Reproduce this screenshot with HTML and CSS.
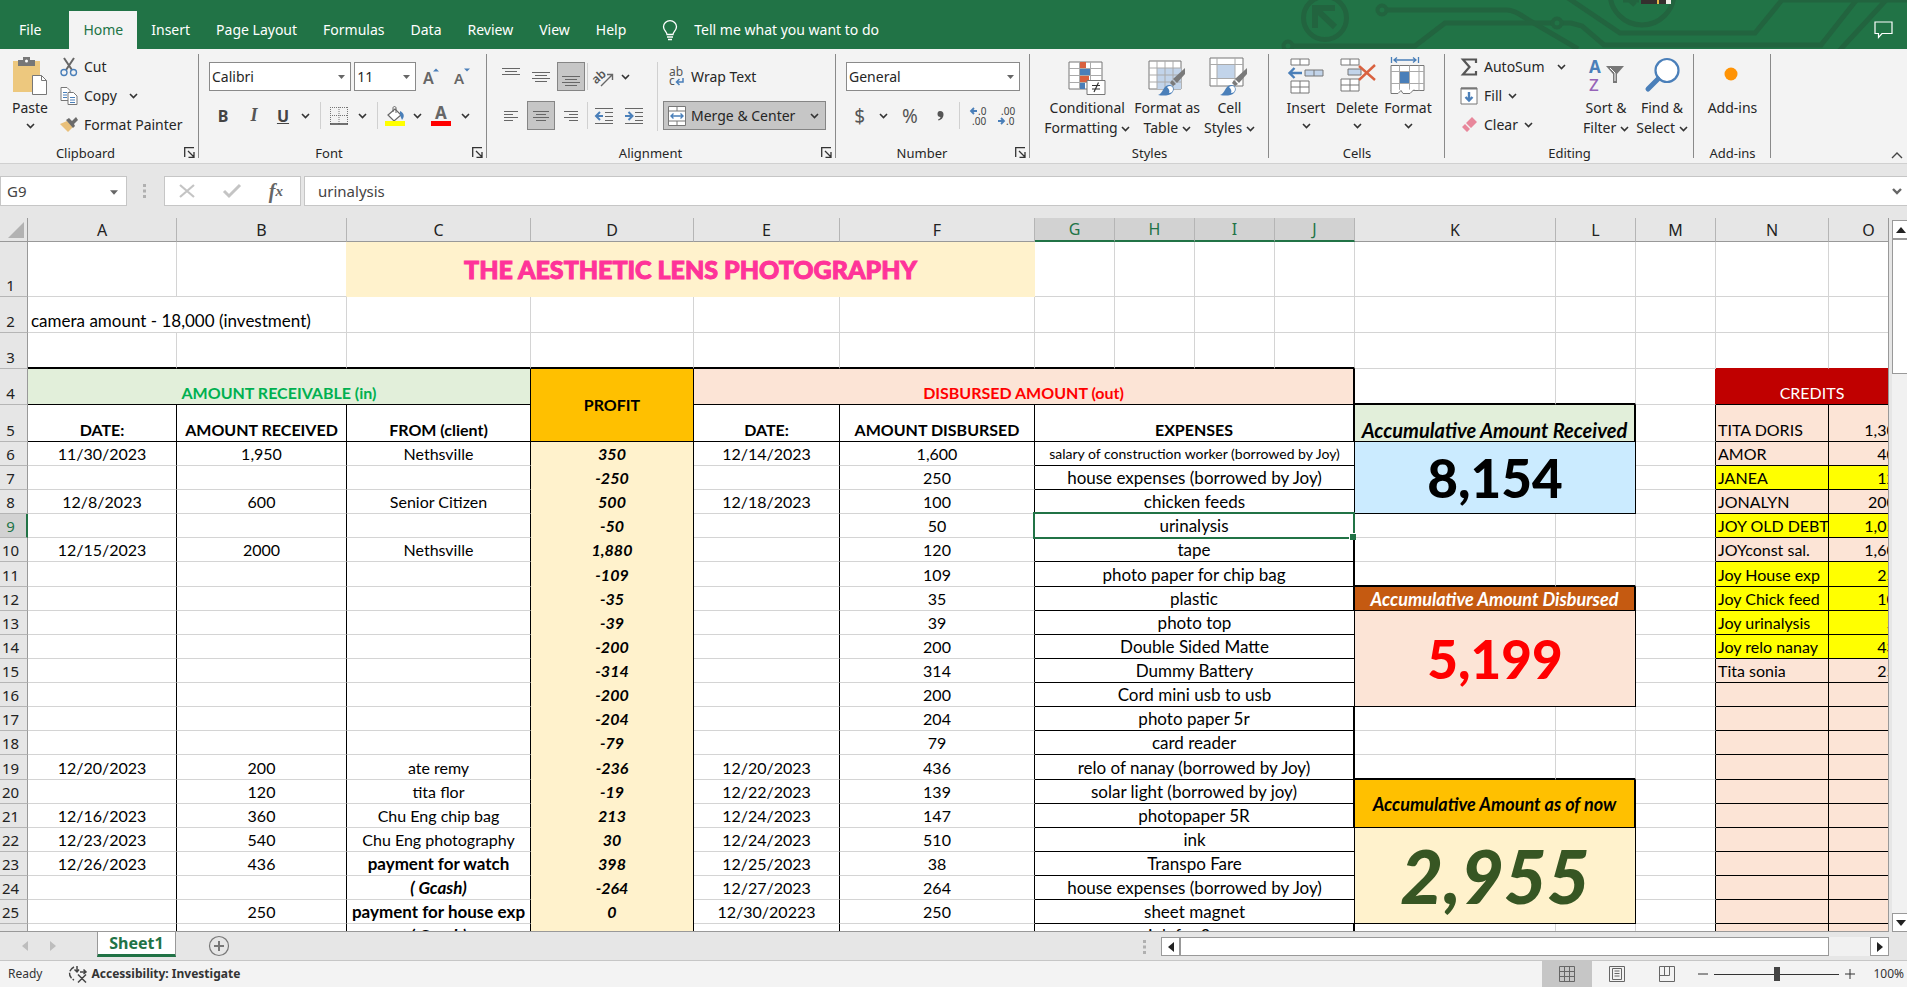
FILE: index.html
```
<!DOCTYPE html>
<html lang="en">
<head>
<meta charset="utf-8">
<title>The Aesthetic Lens Photography</title>
<link rel="stylesheet" href="styles.css">
</head>
<body>
<svg class="defs" aria-hidden="true">
  <symbol id="chev" viewBox="0 0 9 6"><path d="M1 1l3.5 3.5L8 1" fill="none" stroke="#333" stroke-width="1.6"/></symbol>
  <symbol id="launch" viewBox="0 0 11 11"><path d="M.7 10V.7H10M4 4l5.500 5.500M10 5v5.300H4.500" fill="none" stroke="#333" stroke-width="1.300"/></symbol>
  <symbol id="tri" viewBox="0 0 7 4"><path d="M0 0h7L3.500 4z" fill="#666"/></symbol>
  <symbol id="brush" viewBox="0 0 28 28"><path d="M27 0v6l-8 9-4-4z" fill="#7a7a7a"/><path d="M14 12l4 4-3 2-3-3z" fill="#7a7a7a"/><path d="M0 27c5-1 5-10 11-10 5 0 6 5 3 8-3 3-9 3-14 2z" fill="#4a7fb9"/><path d="M9 19c3-2 6-1 6 2s-2 4-4 4c1-2 0-4-2-6z" fill="#fff"/></symbol>
</svg>

<header class="tabs">
  <svg class="circuit" viewBox="0 0 627 49" width="627" height="49" aria-hidden="true">
    <g fill="none" stroke="#22643f" stroke-width="5">
      <circle cx="45" cy="18" r="21.500"/>
      <path d="M35 28V8h20M36 9l19 18" stroke-width="6"/>
      <circle cx="102" cy="10" r="4.500" stroke-width="4"/>
      <path d="M107 10h120c10 0 17 8 25 12l46 27"/>
      <circle cx="8" cy="46" r="4.500" stroke-width="4"/>
      <path d="M13 46h122l30-23h107M282 23h9l11 3 22 19h217l37-47"/>
      <circle cx="277" cy="23" r="4.500" stroke-width="4"/>
      <path d="M288-2l52 35h135l27-33h125M559 51l48-52"/>
      <circle cx="362" cy="-7" r="32"/>
      <path d="M345-4l10 9M343 0h16"/>
    </g>
    <path d="M361 0h29v4h-29z" fill="#352f2e"/><path d="M377 0h2v4h-2z" fill="#e8b84a"/><path d="M386 0h5v4h-5z" fill="#f1eee9"/>
  </svg>
  <nav class="tablist">
    <button class="tab file">File</button><button class="tab on">Home</button><button class="tab">Insert</button><button class="tab">Page Layout</button><button class="tab">Formulas</button><button class="tab">Data</button><button class="tab">Review</button><button class="tab">View</button><button class="tab">Help</button>
    <button class="tab tell"><svg width="16" height="21" viewBox="0 0 16 21"><path d="M5 14.500C5 12 1.500 10.500 1.500 6.700a6.500 6 0 0 1 13 0C14.500 10.500 11 12 11 14.500zM5 17h6M6 19.500h4" fill="none" stroke="#fff" stroke-width="1.300"/></svg>Tell me what you want to do</button>
  </nav>
  <button class="comment" aria-label="Comments"><svg width="20" height="18" viewBox="0 0 20 18"><path d="M1 1h17v11.500H8l-3.500 4v-4H1z" fill="none" stroke="#fff" stroke-width="1.200"/></svg></button>
</header>

<section class="ribbon" aria-label="Home">
  <div class="group g-clip">
    <div class="body top">
      <button class="big paste"><svg width="36" height="40" viewBox="0 0 36 40"><path d="M1 4h27v31H1z" fill="#edc87e"/><path d="M6 3h5V0h7v3h5v6H6z" fill="#777"/><circle cx="14.500" cy="4" r="1.500" fill="#fff"/><path d="M20.500 18.500h9l5 5v14h-14z" fill="#fff" stroke="#777"/><path d="M29.500 18.500v5h5" fill="none" stroke="#777"/></svg><span>Paste</span><svg class="chev"><use href="#chev"/></svg></button>
      <div class="list">
        <button class="small"><svg width="18" height="20" viewBox="0 0 18 20"><path d="M4 1l8 12M14 1L6 13" stroke="#666" stroke-width="2"/><circle cx="4" cy="15.500" r="3" fill="none" stroke="#4a7fb9" stroke-width="1.400"/><circle cx="13.500" cy="15.500" r="3" fill="none" stroke="#4a7fb9" stroke-width="1.400"/></svg>Cut</button>
        <button class="small"><svg width="18" height="20" viewBox="0 0 18 20"><g fill="#fff" stroke="#777"><path d="M1 1.500h6l3 3v10H1z"/><path d="M8 6.500h5.500l3.500 3.500v8.500H8z"/></g><path d="M3 6.500h4M3 9h4M3 11.500h4M10 11.500h5M10 14h5M10 16.500h5" stroke="#4a7fb9"/></svg>Copy<svg class="chev far"><use href="#chev"/></svg></button>
        <button class="small"><svg width="18" height="18" viewBox="0 0 18 18"><path d="M0 8l7-3 6 6-5 5z" fill="#e9c07a"/><path d="M6 4l3-2 3 3 4-4 2 3-4 4 1 2-2 2z" fill="#6b6b6b"/></svg>Format Painter</button>
      </div>
    </div>
    <div class="foot">Clipboard<button class="launch" aria-label="Clipboard options"><svg><use href="#launch"/></svg></button></div>
  </div>

  <div class="group g-font">
    <div class="body rows">
      <div class="row">
        <label class="combo fname"><select aria-label="Font"><option>Calibri</option></select><svg><use href="#tri"/></svg></label>
        <label class="combo fsize"><select aria-label="Font size"><option>11</option></select><svg><use href="#tri"/></svg></label>
        <button class="ic w28" aria-label="Increase font size"><svg width="18" height="18" viewBox="0 0 18 18"><text x="0" y="16" class="t15">A</text><path d="M10 3.500l3-3 3 3z" fill="#4a7fb9"/></svg></button>
        <button class="ic w28" aria-label="Decrease font size"><svg width="18" height="18" viewBox="0 0 18 18"><text x="0" y="16" class="t14">A</text><path d="M10 .5l3 3 3-3z" fill="#4a7fb9"/></svg></button>
      </div>
      <div class="row tight">
        <button class="ic w28 fb">B</button><button class="ic w34 fi">I</button><button class="ic w24 fu">U</button><button class="ic w20" aria-label="Underline styles"><svg class="chev"><use href="#chev"/></svg></button><i class="vs"></i>
        <button class="ic w26" aria-label="Borders"><svg width="18" height="18" viewBox="0 0 18 18"><path d="M.5 0v17M17.500 0v17M9 0v17M0 .5h18M0 8.500h18" stroke="#777" stroke-dasharray="1 1" fill="none"/><path d="M0 17h18" stroke="#444" stroke-width="1.500"/></svg></button><button class="ic w20" aria-label="Border styles"><svg class="chev"><use href="#chev"/></svg></button><i class="vs"></i>
        <button class="ic w24" aria-label="Fill colour"><svg width="20" height="20" viewBox="0 0 20 20"><path d="M3 9l7-6 6 6-7 6z" fill="#fff" stroke="#666" stroke-width="1.200"/><path d="M8 6V2c0-2 3-2 3 0v5" fill="none" stroke="#666"/><path d="M15 5c4 2 5 5 2 9l-2-5z" fill="#4a7fb9"/><path d="M0 15h20v5H0z" fill="#ff0"/></svg></button><button class="ic w20" aria-label="Fill colours"><svg class="chev"><use href="#chev"/></svg></button>
        <button class="ic w28" aria-label="Font colour"><svg width="20" height="20" viewBox="0 0 20 20"><text x="4" y="13" class="fa">A</text><path d="M0 15h20v5H0z" fill="#f00"/></svg></button><button class="ic w20" aria-label="Font colours"><svg class="chev"><use href="#chev"/></svg></button>
      </div>
    </div>
    <div class="foot">Font<button class="launch" aria-label="Font options"><svg><use href="#launch"/></svg></button></div>
  </div>

  <div class="group g-align">
    <div class="body cols">
      <div class="aligns">
        <button class="ic" aria-label="Top align"><svg width="18" height="18" viewBox="0 0 18 18"><path d="M0 .5h18M3 3.500h12M0 6.500h18" stroke="#666"/></svg></button>
        <button class="ic" aria-label="Middle align"><svg width="18" height="18" viewBox="0 0 18 18"><path d="M0 4.500h18M3 7.500h12M0 10.500h18M3 13.500h12" stroke="#666"/></svg></button>
        <button class="ic act" aria-label="Bottom align"><svg width="18" height="18" viewBox="0 0 18 18"><path d="M0 8.500h18M3 11.500h12M0 14.500h18M3 17.500h12" stroke="#666"/></svg></button>
        <i class="vs"></i>
        <button class="ic" aria-label="Orientation"><svg width="20" height="20" viewBox="0 0 20 20"><text x="-2" y="13" class="t12 m" transform="rotate(-42 6 10)">ab</text><path d="M7 19L18 8M13 7.500h5.500V13" fill="none" stroke="#666" stroke-width="1.400"/></svg></button>
        <button class="ic start" aria-label="Orientation choices"><svg class="chev"><use href="#chev"/></svg></button>
        <button class="ic" aria-label="Align left"><svg width="18" height="18" viewBox="0 0 18 18"><path d="M2 4.500h14M2 7.500h9M2 10.500h14M2 13.500h9" stroke="#666"/></svg></button>
        <button class="ic act" aria-label="Centre"><svg width="18" height="18" viewBox="0 0 18 18"><path d="M1 4.500h16M4 7.500h10M1 10.500h16M4 13.500h10" stroke="#666"/></svg></button>
        <button class="ic" aria-label="Align right"><svg width="18" height="18" viewBox="0 0 18 18"><path d="M2 4.500h14M7 7.500h9M2 10.500h14M7 13.500h9" stroke="#666"/></svg></button>
        <i class="vs"></i>
        <button class="ic" aria-label="Decrease indent"><svg width="18" height="18" viewBox="0 0 18 18"><path d="M0 1.500h18M10 5.500h8M10 9.500h8M10 13.500h8M0 16.500h18" stroke="#666"/><path d="M8 9H2M5 5L1 9l4 4" stroke="#4a7fb9" stroke-width="2" fill="none"/></svg></button>
        <button class="ic" aria-label="Increase indent"><svg width="18" height="18" viewBox="0 0 18 18"><path d="M0 1.500h18M10 5.500h8M10 9.500h8M10 13.500h8M0 16.500h18" stroke="#666"/><path d="M0 9h6M3.500 5l4 4-4 4" stroke="#4a7fb9" stroke-width="2" fill="none"/></svg></button>
      </div>
      <i class="vs tall"></i>
      <div class="wraps">
        <button class="wide"><svg width="18" height="20" viewBox="0 0 18 20"><text x="1" y="9" class="t12">ab</text><text x="1" y="18" class="t12">c</text><path d="M15 11v4H9M11.500 12l-3 3 3 3" stroke="#4a7fb9" stroke-width="1.500" fill="none"/></svg>Wrap Text</button>
        <button class="wide act"><svg width="18" height="20" viewBox="0 0 18 20"><path d="M.5.500h17v19H.5zM.5 5h17M.5 15h17M9 .5V5M9 15v4.500" fill="#fff" stroke="#777"/><path d="M3 10h12M5.500 7.500L3 10l2.500 2.500M12.500 7.500L15 10l-2.500 2.500" fill="none" stroke="#4a7fb9" stroke-width="1.400"/></svg>Merge &amp; Center<svg class="chev"><use href="#chev"/></svg></button>
      </div>
    </div>
    <div class="foot">Alignment<button class="launch" aria-label="Alignment options"><svg><use href="#launch"/></svg></button></div>
  </div>

  <div class="group g-num">
    <div class="body rows">
      <div class="row"><label class="combo fnum"><select aria-label="Number format"><option>General</option></select><svg><use href="#tri"/></svg></label></div>
      <div class="row tight">
        <button class="ic w28 sym">$</button><button class="ic w20" aria-label="Currency choices"><svg class="chev"><use href="#chev"/></svg></button><button class="ic w34 sym">%</button><button class="ic w28" aria-label="Comma style"><svg width="7" height="10" viewBox="0 0 7 10"><path d="M3 0c2.500 0 3.500 1.500 3.500 3.500C6.500 7 4 9 1.500 9.500L1 8.500C2.500 8 3.500 7 3.500 6 1.500 6 .5 5 .5 3S1.500 0 3 0z" fill="#555"/></svg></button><i class="vs"></i>
        <button class="ic w28" aria-label="Increase decimal"><svg width="17" height="20" viewBox="0 0 17 20"><text x="8" y="9" class="t10">.0</text><text x="2" y="19" class="t10">.00</text><path d="M7 5H1.500M4 2L1 5l3 3" stroke="#4a7fb9" stroke-width="1.800" fill="none"/></svg></button>
        <button class="ic w28" aria-label="Decrease decimal"><svg width="17" height="20" viewBox="0 0 17 20"><text x="3" y="9" class="t10">.00</text><text x="8" y="19" class="t10">.0</text><path d="M0 15h5.500M3 12l3 3-3 3" stroke="#4a7fb9" stroke-width="1.800" fill="none"/></svg></button>
      </div>
    </div>
    <div class="foot">Number<button class="launch" aria-label="Number options"><svg><use href="#launch"/></svg></button></div>
  </div>

  <div class="group g-styles">
    <div class="body top">
      <button class="big"><svg width="38" height="40" viewBox="0 0 38 40"><path d="M1 5h33v27H1z" fill="#fff" stroke="#777"/><path d="M1 11.500h33M1 18.500h33M1 25.500h33M11.500 5v27M22.500 5v27" stroke="#aaa"/><path d="M12 5h6v6h-6zM12 19h9v6h-9z" fill="#d9613f"/><path d="M12 12h10v6H12zM12 26h5v6h-5z" fill="#4a7fb9"/><path d="M19 23.500h18v14H19z" fill="#fff" stroke="#777"/><path d="M24 28.500h8M24 32h8M30.500 25.500L26 35" stroke="#333" stroke-width="1.200"/></svg><span>Conditional<br>Formatting <svg class="chev"><use href="#chev"/></svg></span></button>
      <button class="big"><svg width="38" height="40" viewBox="0 0 38 40"><path d="M1 4h32v28H1z" fill="#fff" stroke="#777"/><path d="M9 11h24v21H9z" fill="#c2d4ea"/><path d="M1 11h32M1 18h32M1 25h32M9 4v28M17 4v28M25 4v28" stroke="#aaa" fill="none"/><use href="#brush" x="10" y="11" width="28" height="28"/></svg><span>Format as<br>Table <svg class="chev"><use href="#chev"/></svg></span></button>
      <button class="big"><svg width="40" height="40" viewBox="0 0 40 40"><path d="M1 1h33v28H1z" fill="#fff" stroke="#777"/><path d="M8 8h18v13H8z" fill="#c2d4ea"/><path d="M1 7.500h33M1 21.500h33M8 1v28M26 1v28" stroke="#aaa"/><use href="#brush" x="11" y="11" width="28" height="28"/></svg><span>Cell<br>Styles <svg class="chev"><use href="#chev"/></svg></span></button>
    </div>
    <div class="foot">Styles</div>
  </div>

  <div class="group g-cells">
    <div class="body top">
      <button class="big"><svg width="38" height="40" viewBox="0 0 38 40"><g fill="#fff" stroke="#777"><path d="M4 2h18v6H4zM13 2v6M4 24h18v12H4zM4 30h18M13 24v12"/><path d="M18 13h18v6H18zM27 13v6" fill="#c2d4ea"/></g><path d="M15 16H3M7.500 11l-5 5 5 5" fill="none" stroke="#4a7fb9" stroke-width="2.400"/></svg><span>Insert</span><svg class="chev"><use href="#chev"/></svg></button>
      <button class="big"><svg width="38" height="40" viewBox="0 0 38 40"><g fill="#fff" stroke="#777"><path d="M3 2h18v6H3zM12 2v6M3 22h18v12H3zM3 28h18M12 22v12"/><path d="M10 12h13v6H10z" fill="#c2d4ea"/></g><path d="M21 9l16 14M37 8L21 23" fill="none" stroke="#d9613f" stroke-width="2.400"/></svg><span>Delete</span><svg class="chev"><use href="#chev"/></svg></button>
      <button class="big"><svg width="38" height="40" viewBox="0 0 38 40"><path d="M2.500 0v6M29.500 0v6M5 3h22M8 .5L5 3l3 2.500M24 .5L27 3l-3 2.500" fill="none" stroke="#4a7fb9" stroke-width="1.300"/><path d="M2 8.500h33v25H2z" fill="#fff" stroke="#777"/><path d="M2 14.500h33M2 26.500h33M10.500 8.500v25M20.500 8.500v25M30 8.500v25" stroke="#aaa"/><path d="M11 15h9v11h-9z" fill="#4a7fb9"/><path d="M2 33v3.500h7l3-3 2 3h7l4-4" fill="#fff" stroke="#777"/></svg><span>Format</span><svg class="chev"><use href="#chev"/></svg></button>
    </div>
    <div class="foot">Cells</div>
  </div>

  <div class="group g-edit">
    <div class="body top">
      <div class="list">
        <button class="small"><svg width="18" height="18" viewBox="0 0 18 18"><path d="M16 5V1.500H3L9.500 9 3 16.500h13V13" fill="none" stroke="#555" stroke-width="2.200"/></svg>AutoSum<svg class="chev far"><use href="#chev"/></svg></button>
        <button class="small"><svg width="18" height="18" viewBox="0 0 18 18"><path d="M1 1h16v16H1z" fill="#fff" stroke="#777"/><path d="M1 1.500h16" stroke="#777" stroke-width="2"/><path d="M9 5v8M5.500 10L9 13.500l3.500-3.500" stroke="#4a7fb9" stroke-width="2.400" fill="none"/></svg>Fill<svg class="chev"><use href="#chev"/></svg></button>
        <button class="small"><svg width="18" height="18" viewBox="0 0 18 18"><path d="M6 7l6-6 5 5-6 6zM5 8l5 5-3 3-5-5z" fill="#e8879b"/></svg>Clear<svg class="chev"><use href="#chev"/></svg></button>
      </div>
      <button class="big"><svg width="38" height="40" viewBox="0 0 38 40"><text x="2" y="16" class="az b">A</text><text x="2" y="34" class="az p">Z</text><path d="M19 9h18l-7 8v9h-4v-9z" fill="#777"/><path d="M23 11l5 5v8" fill="none" stroke="#fff"/></svg><span>Sort &amp;<br>Filter <svg class="chev"><use href="#chev"/></svg></span></button>
      <button class="big"><svg width="38" height="40" viewBox="0 0 38 40"><circle cx="24" cy="13.500" r="11.500" fill="#fff" stroke="#4a7fb9" stroke-width="2.200"/><path d="M15 22L5 32" stroke="#4a7fb9" stroke-width="5" stroke-linecap="round"/></svg><span>Find &amp;<br>Select <svg class="chev"><use href="#chev"/></svg></span></button>
    </div>
    <div class="foot">Editing</div>
  </div>

  <div class="group g-add">
    <div class="body top">
      <button class="big"><svg width="38" height="40" viewBox="0 0 38 40"><circle cx="17" cy="17" r="6.500" fill="#ff9305"/></svg><span>Add-ins</span></button>
    </div>
    <div class="foot">Add-ins</div>
  </div>
  <button class="collapse" aria-label="Collapse the ribbon"><svg width="12" height="7" viewBox="0 0 12 7"><path d="M1 6l5-5 5 5" fill="none" stroke="#444" stroke-width="1.400"/></svg></button>
</section>

<section class="fbar">
  <label class="namebox"><input aria-label="Name box" value="G9"><svg><use href="#tri"/></svg></label>
  <svg class="dots" width="3" height="14" viewBox="0 0 3 14"><path d="M0 0h3v3H0zM0 5.500h3v3H0zM0 11h3v3H0z" fill="#b0b0b0"/></svg>
  <div class="fbtns">
    <button aria-label="Cancel"><svg width="16" height="14" viewBox="0 0 16 14"><path d="M1 1l14 12M15 1L1 13" stroke="#c4c4c4" stroke-width="2.200"/></svg></button>
    <button aria-label="Enter"><svg width="18" height="14" viewBox="0 0 18 14"><path d="M1 7l5 5L17 1" fill="none" stroke="#c4c4c4" stroke-width="3"/></svg></button>
    <button class="fx" aria-label="Insert function">f<sub>x</sub></button>
  </div>
  <div class="finput"><input aria-label="Formula" value="urinalysis"><svg width="10" height="7" viewBox="0 0 10 7"><path d="M1 1l4 4 4-4" fill="none" stroke="#666" stroke-width="2.400"/></svg></div>
</section>

<main class="work">
<div class="sheet">
<table>
<colgroup><col class="c0"><col class="cA"><col class="cB"><col class="cC"><col class="cD"><col class="cE"><col class="cF"><col class="c80"><col class="c80"><col class="c80"><col class="c80"><col class="cK"><col class="c80"><col class="c80"><col class="cN"><col class="c80"></colgroup>
<thead><tr><th class="corner"><svg width="16" height="16" viewBox="0 0 16 16"><path d="M16 0v16H0z" fill="#b2b2b2"/></svg></th><th>A</th><th>B</th><th>C</th><th>D</th><th>E</th><th>F</th><th class="sel">G</th><th class="sel">H</th><th class="sel">I</th><th class="sel">J</th><th>K</th><th>L</th><th>M</th><th>N</th><th>O</th></tr></thead>
<tbody>
<tr class="r1"><th>1</th><td></td><td class="rc"></td><td colspan="4" class="title">THE AESTHETIC LENS PHOTOGRAPHY</td><td></td><td></td><td></td><td></td><td></td><td></td><td></td><td></td><td></td></tr>
<tr class="r36"><th>2</th><td colspan="2" class="l">camera amount - 18,000 (investment)</td><td></td><td></td><td></td><td></td><td></td><td></td><td></td><td></td><td></td><td></td><td></td><td></td><td></td></tr>
<tr class="r36 r3"><th>3</th><td class="bb"></td><td class="bb"></td><td class="bb"></td><td class="bb"></td><td class="bb"></td><td class="bb"></td><td class="bb"></td><td class="bb"></td><td class="bb"></td><td class="bb"></td><td></td><td></td><td></td><td class="red-b"></td><td class="red-b"></td></tr>
<tr class="r36"><th>4</th><td colspan="3" class="k b recv">AMOUNT RECEIVABLE (in)</td><td rowspan="2" class="k b profit">PROFIT</td><td colspan="6" class="kk b disb">DISBURSED AMOUNT (out)</td><td class="bb"></td><td class="bb"></td><td class="red-r"></td><td colspan="2" class="credits">CREDITS</td></tr>
<tr class="r37"><th>5</th><td class="k b h">DATE:</td><td class="k b h">AMOUNT RECEIVED</td><td class="k b h">FROM (client)</td><td class="k b h">DATE:</td><td class="k b h">AMOUNT DISBURSED</td><td colspan="4" class="kk b h">EXPENSES</td><td colspan="2" class="kk acc green">Accumulative Amount Received</td><td class="kr"></td><td class="n">TITA DORIS</td><td class="o">1,300</td></tr>
<tr><th>6</th><td class="k">11/30/2023</td><td class="k">1,950</td><td class="k">Nethsville</td><td class="d">350</td><td class="k">12/14/2023</td><td class="k">1,600</td><td colspan="4" class="x tiny">salary of construction worker (borrowed by Joy)</td><td colspan="2" rowspan="3" class="sum blue">8,154</td><td class="kr"></td><td class="n">AMOR</td><td class="o">400</td></tr>
<tr><th>7</th><td class="k"></td><td class="k"></td><td class="k"></td><td class="d">-250</td><td class="k"></td><td class="k">250</td><td colspan="4" class="x">house expenses (borrowed by Joy)</td><td class="kr"></td><td class="n y">JANEA</td><td class="o y">120</td></tr>
<tr><th>8</th><td class="k">12/8/2023</td><td class="k">600</td><td class="k">Senior Citizen</td><td class="d">500</td><td class="k">12/18/2023</td><td class="k">100</td><td colspan="4" class="x">chicken feeds</td><td class="kr"></td><td class="n">JONALYN</td><td class="o">2000</td></tr>
<tr><th class="sel">9</th><td class="k"></td><td class="k"></td><td class="k"></td><td class="d">-50</td><td class="k"></td><td class="k">50</td><td colspan="4" class="x t cursor">urinalysis</td><td></td><td></td><td class="kr"></td><td class="n y">JOY OLD DEBT</td><td class="o y">1,050</td></tr>
<tr><th>10</th><td class="k">12/15/2023</td><td class="k">2000</td><td class="k">Nethsville</td><td class="d">1,880</td><td class="k"></td><td class="k">120</td><td colspan="4" class="x t">tape</td><td></td><td></td><td class="kr"></td><td class="n">JOYconst sal.</td><td class="o">1,600</td></tr>
<tr class="r25"><th>11</th><td class="k"></td><td class="k"></td><td class="k"></td><td class="d">-109</td><td class="k"></td><td class="k">109</td><td colspan="4" class="x t">photo paper for chip bag</td><td class="bb"></td><td class="bb"></td><td class="kr"></td><td class="n y">Joy House exp</td><td class="o y">250</td></tr>
<tr><th>12</th><td class="k"></td><td class="k"></td><td class="k"></td><td class="d">-35</td><td class="k"></td><td class="k">35</td><td colspan="4" class="x t">plastic</td><td colspan="2" class="kk acc rust">Accumulative Amount Disbursed</td><td class="kr"></td><td class="n y">Joy Chick feed</td><td class="o y">100</td></tr>
<tr><th>13</th><td class="k"></td><td class="k"></td><td class="k"></td><td class="d">-39</td><td class="k"></td><td class="k">39</td><td colspan="4" class="x">photo top</td><td colspan="2" rowspan="4" class="sum pink">5,199</td><td class="kr"></td><td class="n y">Joy urinalysis</td><td class="o y">50</td></tr>
<tr><th>14</th><td class="k"></td><td class="k"></td><td class="k"></td><td class="d">-200</td><td class="k"></td><td class="k">200</td><td colspan="4" class="x">Double Sided Matte</td><td class="kr"></td><td class="n y">Joy relo nanay</td><td class="o y">436</td></tr>
<tr><th>15</th><td class="k"></td><td class="k"></td><td class="k"></td><td class="d">-314</td><td class="k"></td><td class="k">314</td><td colspan="4" class="x">Dummy Battery</td><td class="kr"></td><td class="n">Tita sonia</td><td class="o">250</td></tr>
<tr><th>16</th><td class="k"></td><td class="k"></td><td class="k"></td><td class="d">-200</td><td class="k"></td><td class="k">200</td><td colspan="4" class="x">Cord mini usb to usb</td><td class="kr"></td><td class="n"></td><td class="o"></td></tr>
<tr><th>17</th><td class="k"></td><td class="k"></td><td class="k"></td><td class="d">-204</td><td class="k"></td><td class="k">204</td><td colspan="4" class="x t">photo paper 5r</td><td></td><td></td><td class="kr"></td><td class="n"></td><td class="o"></td></tr>
<tr><th>18</th><td class="k"></td><td class="k"></td><td class="k"></td><td class="d">-79</td><td class="k"></td><td class="k">79</td><td colspan="4" class="x t">card reader</td><td></td><td></td><td class="kr"></td><td class="n"></td><td class="o"></td></tr>
<tr class="r25"><th>19</th><td class="k">12/20/2023</td><td class="k">200</td><td class="k">ate remy</td><td class="d">-236</td><td class="k">12/20/2023</td><td class="k">436</td><td colspan="4" class="x t">relo of nanay (borrowed by Joy)</td><td class="bb"></td><td class="bb"></td><td class="kr"></td><td class="n"></td><td class="o"></td></tr>
<tr><th>20</th><td class="k"></td><td class="k">120</td><td class="k">tita flor</td><td class="d">-19</td><td class="k">12/22/2023</td><td class="k">139</td><td colspan="4" class="x t">solar light (borrowed by joy)</td><td colspan="2" rowspan="2" class="kk acc gold">Accumulative Amount as of now</td><td class="kr"></td><td class="n"></td><td class="o"></td></tr>
<tr><th>21</th><td class="k">12/16/2023</td><td class="k">360</td><td class="k">Chu Eng chip bag</td><td class="d">213</td><td class="k">12/24/2023</td><td class="k">147</td><td colspan="4" class="x t">photopaper 5R</td><td class="kr"></td><td class="n"></td><td class="o"></td></tr>
<tr><th>22</th><td class="k">12/23/2023</td><td class="k">540</td><td class="k">Chu Eng photography</td><td class="d">30</td><td class="k">12/24/2023</td><td class="k">510</td><td colspan="4" class="x">ink</td><td colspan="2" rowspan="4" class="sum cream">2,955</td><td class="kr"></td><td class="n"></td><td class="o"></td></tr>
<tr><th>23</th><td class="k">12/26/2023</td><td class="k">436</td><td class="k b pay">payment for watch</td><td class="d">398</td><td class="k">12/25/2023</td><td class="k">38</td><td colspan="4" class="x">Transpo Fare</td><td class="kr"></td><td class="n"></td><td class="o"></td></tr>
<tr><th>24</th><td class="k"></td><td class="k"></td><td class="k b pay it">( Gcash)</td><td class="d">-264</td><td class="k">12/27/2023</td><td class="k">264</td><td colspan="4" class="x">house expenses (borrowed by Joy)</td><td class="kr"></td><td class="n"></td><td class="o"></td></tr>
<tr><th>25</th><td class="k"></td><td class="k">250</td><td class="k b pay">payment for house exp</td><td class="d">0</td><td class="k">12/30/20223</td><td class="k">250</td><td colspan="4" class="x">sheet magnet</td><td class="kr"></td><td class="n"></td><td class="o"></td></tr>
<tr><th>26</th><td class="k"></td><td class="k"></td><td class="k b pay it">( Gcash)</td><td class="d">-90</td><td class="k">12/30/2023</td><td class="k">90</td><td colspan="4" class="x t">ink for 3 pcs</td><td></td><td></td><td class="kr"></td><td class="n"></td><td class="o"></td></tr>
</tbody>
</table>
</div>
<div class="vscroll">
  <button aria-label="Scroll up"><svg width="10" height="6" viewBox="0 0 10 6"><path d="M0 6l5-6 5 6z" fill="#222"/></svg></button>
  <div class="track"><div class="thumb"></div></div>
  <button aria-label="Scroll down"><svg width="10" height="6" viewBox="0 0 10 6"><path d="M0 0l5 6 5-6z" fill="#222"/></svg></button>
</div>
</main>

<div class="sheets">
  <button class="nav" aria-label="Previous sheet"><svg width="6" height="10" viewBox="0 0 6 10"><path d="M6 0v10L0 5z" fill="#bdbdbd"/></svg></button>
  <button class="nav" aria-label="Next sheet"><svg width="6" height="10" viewBox="0 0 6 10"><path d="M0 0v10l6-5z" fill="#bdbdbd"/></svg></button>
  <button class="stab">Sheet1</button>
  <button class="add" aria-label="New sheet"><svg width="22" height="22" viewBox="0 0 22 22"><circle cx="11" cy="11" r="9.500" fill="none" stroke="#777" stroke-width="1.200"/><path d="M6 11h10M11 6v10" stroke="#777" stroke-width="2"/></svg></button>
  <div class="hs">
    <svg class="dots" width="3" height="14" viewBox="0 0 3 14"><path d="M0 0h3v3H0zM0 5.500h3v3H0zM0 11h3v3H0z" fill="#b0b0b0"/></svg>
    <button aria-label="Scroll left"><svg width="6" height="10" viewBox="0 0 6 10"><path d="M6 0v10L0 5z" fill="#222"/></svg></button>
    <div class="htrack"><div class="hthumb"></div></div>
    <button aria-label="Scroll right"><svg width="6" height="10" viewBox="0 0 6 10"><path d="M0 0v10l6-5z" fill="#222"/></svg></button>
  </div>
</div>

<footer class="status">
  <span>Ready</span>
  <button class="access"><svg width="20" height="18" viewBox="0 0 20 18"><path d="M6 2C0 5 0 12 6 15" fill="none" stroke="#444" stroke-width="1.400" stroke-dasharray="6 1.500"/><path d="M9 1v6M6.500 4.500L9 7l2-2.500M12 7h6M15.500 4.500L18 7l-2.500 2M10 9.500l8 8M18 9.500l-8 8" fill="none" stroke="#444" stroke-width="1.500"/></svg>Accessibility: Investigate</button>
  <div class="views">
    <button class="on" aria-label="Normal"><svg width="16" height="16" viewBox="0 0 16 16"><path d="M.5.500h15v15H.5zM5.500.500v15M10.500.500v15M.5 5.500h15M.5 10.500h15" fill="none" stroke="#666"/></svg></button>
    <button aria-label="Page layout"><svg width="16" height="16" viewBox="0 0 16 16"><path d="M.5.500h15v15H.5zM3.500 2.500h9v11h-9zM5.500 5h5M5.500 7.500h5M5.500 10h5" fill="none" stroke="#666"/></svg></button>
    <button aria-label="Page break preview"><svg width="16" height="16" viewBox="0 0 16 16"><path d="M.5.500h15v15H.5zM.5 9.500h10v-9M5.500.500v9" fill="none" stroke="#666"/></svg></button>
  </div>
  <div class="zoom">
    <button aria-label="Zoom out"><svg width="10" height="10" viewBox="0 0 10 10"><path d="M0 5h10" stroke="#333"/></svg></button>
    <input type="range" min="0" max="100" value="50" aria-label="Zoom">
    <button aria-label="Zoom in"><svg width="10" height="10" viewBox="0 0 10 10"><path d="M0 5h10M5 0v10" stroke="#333"/></svg></button>
    <span>100%</span>
  </div>
</footer>
</body>
</html>
```
FILE: styles.css
```
* { box-sizing: border-box; }
body {
  margin: 0;
  height: 100vh;
  display: flex;
  flex-direction: column;
  overflow: hidden;
  background: #e6e6e6;
  color: #262626;
  font: 14px/20px "Noto Sans", sans-serif;
}
button, input, select { font: inherit; color: inherit; margin: 0; padding: 0; border: 0; background: none; border-radius: 0; }
button { display: flex; align-items: center; justify-content: center; white-space: nowrap; }
svg { display: block; flex: none; overflow: visible; }
.defs { position: absolute; width: 0; height: 0; }
.chev { width: 9px; height: 6px; }

/* Tab strip */
.tabs { position: relative; flex: none; display: flex; height: 49px; padding-top: 11px; background: #217346; color: #fff; }
.circuit { position: absolute; right: 0; top: 0; overflow: hidden; }
.tablist { display: flex; position: relative; flex: 1; }
.tab { padding: 0 13px; height: 38px; }
.file { padding-left: 19px; margin-right: 15px; }
.tab.on { background: #f3f3f3; color: #217346; padding: 0 14px; margin-right: 1px; }
.tell { gap: 16px; margin-left: 10px; }
.comment { position: relative; width: 42px; height: 38px; padding-right: 4px; }

/* Ribbon */
.ribbon { flex: none; display: flex; position: relative; background: #f3f3f3; border-bottom: 1px solid #d0d0d0; height: 115px; }
.group { flex: none; display: flex; flex-direction: column; position: relative; padding-bottom: 1px; }
.group::after { content: ""; position: absolute; right: 0; top: 5px; bottom: 5px; width: 1px; background: #8a8a8a; }
.g-clip { width: 199px; }
.g-font { width: 288px; }
.g-align { width: 349px; }
.g-num { width: 194px; }
.g-styles { width: 239px; }
.g-cells { width: 176px; }
.g-edit { width: 249px; }
.g-add { width: 77px; }
.body { flex: 1; }
.foot { position: relative; height: 18px; line-height: 18px; font-size: 13px; text-align: center; padding-right: 28px; }
.g-align .foot, .g-num .foot { padding-right: 22px; }
.g-styles .foot, .g-cells .foot, .g-edit .foot, .g-add .foot { padding-right: 0; }
.launch { position: absolute; right: 4px; top: 3px; width: 11px; height: 11px; }
.launch svg { width: 11px; height: 11px; }
.top { display: flex; justify-content: center; padding-top: 3px; }
.g-clip .top, .g-edit .top { justify-content: flex-start; }
.g-clip .top { padding-left: 10px; }
.g-edit .top { padding-left: 15px; }
.big { flex-direction: column; justify-content: flex-start; padding-top: 5px; }
.big span { display: block; line-height: 20px; text-align: center; margin-top: 1px; }
.big span .chev { display: inline-block; vertical-align: middle; }
.big > .chev { margin-top: 5px; }
.paste { width: 40px; }
.list { display: flex; flex-direction: column; margin-left: 10px; }
.g-edit .list { margin: 0 18px 0 0; width: 100px; }
.small { height: 29px; gap: 6px; justify-content: flex-start; }
.far { margin-left: 6px; }
.g-styles .top { gap: 4px; }
.g-cells .top { gap: 6px; }
.g-cells .big { width: 45px; }
.g-edit .big { width: 56px; }

.rows { display: flex; flex-direction: column; gap: 10px; padding: 13px 10px 0; }
.row { display: flex; height: 29px; gap: 3px; }
.row.tight { gap: 0; }
.combo { position: relative; height: 29px; border: 1px solid #8a8a8a; background: #fff; }
.combo select { appearance: none; width: 100%; height: 100%; padding-left: 2px; }
.combo svg { position: absolute; right: 5px; top: 12px; width: 7px; height: 4px; pointer-events: none; }
.fname { width: 144px; }
.fsize { width: 62px; }
.fnum { width: 174px; }
.ic { height: 29px; border: 1px solid transparent; }
.w20 { width: 20px; } .w24 { width: 24px; } .w26 { width: 26px; } .w28 { width: 28px; } .w34 { width: 34px; }
.act { background: #c6c6c6; border: 1px solid #858585; }
.vs { flex: none; width: 1px; margin: 1px 5px; background: #d0d0d0; }
.fb, .fu { font-weight: 700; color: #444; font-size: 16px; }
.fi { font: italic 700 18px "Liberation Serif", serif; color: #555; }
.fu { text-decoration: underline; }
.fa { font: 700 17px "Noto Sans", sans-serif; fill: #666; }
.t15 { font: 600 16px "Noto Sans", sans-serif; fill: #666; }
.t14 { font: 600 15px "Noto Sans", sans-serif; fill: #666; }
.t12 { font: 12px "Noto Sans", sans-serif; fill: #555; }
.m { font-weight: 600; }
.t10 { font: 10px "Noto Sans", sans-serif; fill: #444; }
.sym { font-size: 19px; color: #555; }
.az { font: 600 17px "Noto Sans", sans-serif; }
.az.b { fill: #4a7fb9; }
.az.p { fill: #9664b8; font-weight: 500; }

.cols { display: flex; padding: 13px 10px 0; }
.aligns { display: grid; grid-template-columns: 28px 28px 28px 1px 28px 28px; column-gap: 2px; row-gap: 10px; align-content: start; }
.aligns .vs { margin: 1px 0; }
.start { justify-content: flex-start; }
.vs.tall { height: 69px; margin: 0 5px 0 9px; }
.wraps { display: flex; flex-direction: column; gap: 10px; }
.wide { height: 29px; width: 163px; gap: 5px; padding-left: 4px; justify-content: flex-start; border: 1px solid transparent; }
.wide.act { border-color: #858585; }
.wide .chev { margin-left: 10px; }
.collapse { position: absolute; right: 4px; bottom: 3px; width: 12px; height: 10px; }

/* Formula bar */
.fbar { flex: none; display: flex; align-items: center; height: 54px; }
.namebox, .fbtns, .finput { display: flex; align-items: center; height: 30px; background: #fff; border: 1px solid #c6c6c6; }
.namebox { position: relative; width: 127px; }
.namebox input { width: 100%; padding-left: 6px; }
.namebox svg { position: absolute; right: 8px; top: 13px; width: 8px; height: 5px; }
.fbar .dots { margin: 0 18px 0 16px; }
.fbtns { width: 137px; margin-right: 3px; justify-content: space-between; padding: 0 17px 0 14px; }
.fx { font: italic 700 20px "Liberation Serif", serif; color: #666; }
.fx sub { font-size: 15px; }
.finput { flex: 1; border-right: 0; padding-right: 5px; }
.finput input { flex: 1; padding-left: 13px; }
.namebox input, .finput input { color: #444; font-size: 15px; }

/* Sheet */
.work { flex: 1; min-height: 0; display: flex; }
.sheet { flex: 1; min-width: 0; overflow: hidden; border-right: 1px solid #999; border-bottom: 1px solid #999; background: linear-gradient(#e6e6e6 24px, #fff 24px); }
table { table-layout: fixed; width: 1909px; border-collapse: separate; border-spacing: 0; font: 16px/22px Lato, sans-serif; color: #000; }
.c0 { width: 28px; } .cA { width: 149px; } .cB { width: 170px; } .cC { width: 184px; } .cD { width: 163px; } .cE { width: 146px; } .cF { width: 195px; } .c80 { width: 80px; } .cK { width: 201px; } .cN { width: 113px; }
tr { height: 24px; }
.r1 { height: 55px; } .r36 { height: 36px; } .r37 { height: 37px; } .r25 { height: 25px; }
th { background: #e6e6e6; padding: 0; font: 16px/22px "Noto Sans", sans-serif; color: #222; vertical-align: bottom; }
thead th { height: 24px; border-bottom: 1px solid #999; border-right: 1px solid #b5b5b5; }
tbody th { border-right: 1px solid #999; border-bottom: 1px solid #b5b5b5; padding-right: 6px; font-size: 15px; }
thead .sel { background: #d2d2d2; color: #217346; border-bottom: 2px solid #217346; line-height: 21px; }
tbody .sel { background: #d2d2d2; color: #217346; border-right: 2px solid #217346; padding-right: 5px; }
.corner { border-right-color: #999; }
.corner svg { margin: 0 0 3px 8px; }
td { padding: 0; text-align: center; vertical-align: bottom; border-right: 1px solid #d4d4d4; border-bottom: 1px solid #d4d4d4; white-space: nowrap; overflow: hidden; }
.l { text-align: left; padding-left: 3px; font-size: 17px; }
.b { font-weight: 700; }
.it { font-style: italic; }
.pay { font-size: 17px; }
.k { border-right-color: #000; }
.kk { border-right: 2px solid #000; }
.kr { border-right-color: #000; }
.h { border-bottom-color: #000; }
.bb { border-bottom: 2px solid #000; }
.rc { border-right-color: #fff2cc; }
.title { background: #fff2cc; border-color: #fff2cc; color: #f39; font-weight: 900; font-size: 25px; vertical-align: middle; -webkit-text-stroke: 1px #f39; }
.recv { background: #e2efda; color: #00b050; border-bottom-color: #000; }
.profit { background: #ffc000; border-bottom-color: #000; vertical-align: middle; }
.disb { background: #fce4d6; color: #f00; border-bottom-color: #000; }
.credits { background: #c00000; color: #fff; border-color: #000 #c00000; }
.red-b { border-bottom-color: #c00000; }
.red-r { border-right-color: #c00000; }
.d { background: #fff2cc; border-right-color: #000; border-bottom: 0; padding-bottom: 1px; font-weight: 700; font-style: italic; }
.x { border-color: #000; font-size: 17px; }
.x.t { border-right-width: 2px; }
.x.tiny { font-size: 14px; }
.cursor { position: relative; overflow: visible; }
.cursor::before { content: ""; position: absolute; inset: -2px -2px -2px -2px; border: 2px solid #217346; }
.cursor::after { content: ""; position: absolute; right: -3px; bottom: -3px; width: 6px; height: 6px; background: #217346; border: solid #fff; border-width: 1px 0 0 1px; }
.acc { font-weight: 700; font-style: italic; font-size: 18px; border-bottom-color: #000; }
.green { background: #e2efda; font-size: 20px; }
.rust { background: #c55a11; color: #fff; }
.gold { background: #ffc000; vertical-align: middle; }
.sum { border-color: #000; font-weight: 900; font-size: 53px; line-height: 60px; vertical-align: middle; }
.blue { background: #cbebff; }
.pink { background: #fce4d6; color: #f00; }
.cream { background: #fff2cc; color: #375623; font-style: italic; font-size: 74px; line-height: 84px; }
.n, .o { background: #fce4d6; border-color: #000; }
.n { text-align: left; padding-left: 2px; }
.o { text-align: right; padding-right: 3px; }
.y { background: #ff0; }

.vscroll { flex: none; width: 18px; padding: 2px 0 0 3px; display: flex; flex-direction: column; background: #e6e6e6; overflow: hidden; }
.vscroll button { flex: none; width: 18px; height: 19px; background: #fff; border: 1px solid #999; }
.track { flex: 1; background: #f1f1f1; width: 18px; }
.thumb { height: 135px; background: #fff; border: 1px solid #999; }

/* Sheet tabs and horizontal scroll */
.sheets { flex: none; display: flex; height: 29px; border-bottom: 1px solid #c6c6c6; align-items: flex-start; }
.nav { width: 28px; height: 28px; padding-left: 22px; justify-content: flex-start; }
.stab { width: 79px; height: 25px; margin-left: 41px; background: #fff; border: 1px solid #999; border-top: 0; border-bottom: 3px solid #217346; color: #217346; font-weight: 700; font-size: 16px; }
.add { width: 22px; height: 28px; margin-left: 32px; }
.hs { display: flex; align-items: center; width: 746px; margin: 5px 18px 0 auto; }
.hs button { width: 19px; height: 19px; background: #fff; border: 1px solid #999; }
.hs .dots { margin-right: 15px; }
.htrack { flex: 1; background: #f1f1f1; }
.hthumb { width: 94%; height: 19px; background: #fff; border: 1px solid #999; }

/* Status bar */
.status { flex: none; display: flex; align-items: center; height: 26px; padding-left: 8px; background: #f3f3f3; color: #333; font-size: 12px; }
.access { margin-left: 26px; gap: 3px; font-weight: 700; }
.views { display: flex; margin-left: auto; height: 26px; }
.views button { width: 50px; }
.views .on { background: #c6c6c6; }
.zoom { display: flex; align-items: center; gap: 6px; padding: 0 3px 0 6px; }
.zoom span { margin-left: 12px; }
.zoom input { appearance: none; width: 125px; height: 16px; background: linear-gradient(#333, #333) center / 100% 1px no-repeat; }
.zoom input::-webkit-slider-thumb { appearance: none; width: 6px; height: 14px; background: #444; }
```
